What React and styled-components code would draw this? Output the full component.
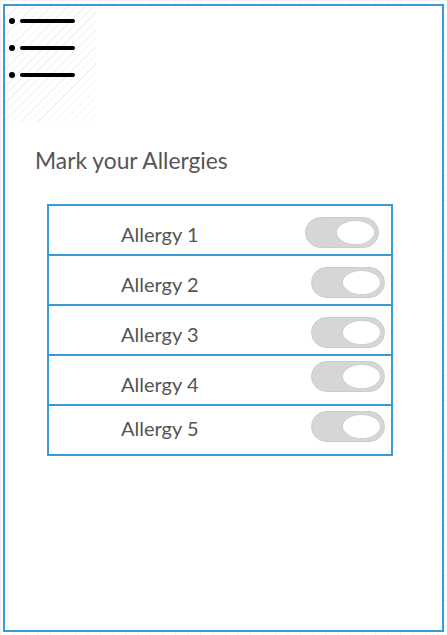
import React from "react";
import styled, { createGlobalStyle } from "styled-components";

const Global = createGlobalStyle`
  html, body { margin: 0; padding: 0; }
  body {
    width: 447px;
    height: 635px;
    overflow: hidden;
    font-family: Lato, "Open Sans", "Liberation Sans", sans-serif;
    background-color: #fff;
    background-image:
      linear-gradient(to right, #f2f2f2 1px, transparent 1px),
      linear-gradient(to bottom, #f2f2f2 1px, transparent 1px);
    background-size: 12.5px 12.5px;
  }
`;

const Frame = styled.div`
  box-sizing: border-box;
  margin: 4px 0 0 3px;
  width: 441px;
  height: 628px;
  border: 2px solid #3a99d8;
  background: #fff;
  display: flex;
  flex-direction: column;
`;

const MenuArea = styled.div`
  width: 91px;
  height: 116px;
  background: repeating-linear-gradient(
    -45deg,
    #fff 0 5px,
    #f2f2f2 5px 6px
  );
  display: flex;
  flex-direction: column;
  gap: 21px;
  padding: 12px 0 0 4px;
  box-sizing: border-box;
`;

const MenuLine = styled.div`
  display: flex;
  align-items: center;
  gap: 5px;
`;

const Dot = styled.span`
  width: 6px;
  height: 6px;
  border-radius: 50%;
  background: #000;
`;

const Bar = styled.span`
  width: 55px;
  height: 4px;
  border-radius: 2px;
  background: #000;
`;

const Title = styled.h1`
  margin: 25px 0 0 30px;
  font-size: 22.8px;
  font-weight: 400;
  color: #555;
  line-height: 26px;
`;

const List = styled.div`
  box-sizing: border-box;
  margin: 31px 0 0 42px;
  width: 346px;
  border: 2px solid #3a99d8;
`;

const Row = styled.div`
  box-sizing: border-box;
  height: 50px;
  display: flex;
  align-items: center;
  justify-content: space-between;
  padding: 0 ${(p) => p.$padRight}px 0 72px;
  & + & {
    border-top: 2px solid #3a99d8;
  }
  &:first-child {
    height: 48px;
  }
`;

const Label = styled.span`
  font-size: 20px;
  color: #555;
  transform: translateY(${(p) => p.$dy}px);
`;

const Toggle = styled.span`
  position: relative;
  box-sizing: border-box;
  width: 74px;
  height: 31px;
  border-radius: 16px;
  background: #d6d6d6;
  border: 1px solid #cdcdcd;
  transform: translateY(${(p) => p.$dy}px);
  &::after {
    content: "";
    position: absolute;
    right: 3px;
    top: 2px;
    width: 39px;
    height: 25px;
    border-radius: 50%;
    background: #fff;
    border: 1px solid #cfcfcf;
    box-sizing: border-box;
  }
`;

const items = [
  { name: "Allergy 1", labelDy: 4, toggleDy: 2, pad: 12 },
  { name: "Allergy 2", labelDy: 4, toggleDy: 2, pad: 6 },
  { name: "Allergy 3", labelDy: 4, toggleDy: 2, pad: 6 },
  { name: "Allergy 4", labelDy: 4, toggleDy: -4, pad: 6 },
  { name: "Allergy 5", labelDy: -2, toggleDy: -4, pad: 6 },
];

export default function App() {
  return (
    <>
      <Global />
      <Frame>
        <MenuArea>
          {[0, 1, 2].map((i) => (
            <MenuLine key={i}>
              <Dot />
              <Bar />
            </MenuLine>
          ))}
        </MenuArea>
        <Title>Mark your Allergies</Title>
        <List>
          {items.map((it) => (
            <Row key={it.name} $padRight={it.pad}>
              <Label $dy={it.labelDy}>{it.name}</Label>
              <Toggle $dy={it.toggleDy} />
            </Row>
          ))}
        </List>
      </Frame>
    </>
  );
}
